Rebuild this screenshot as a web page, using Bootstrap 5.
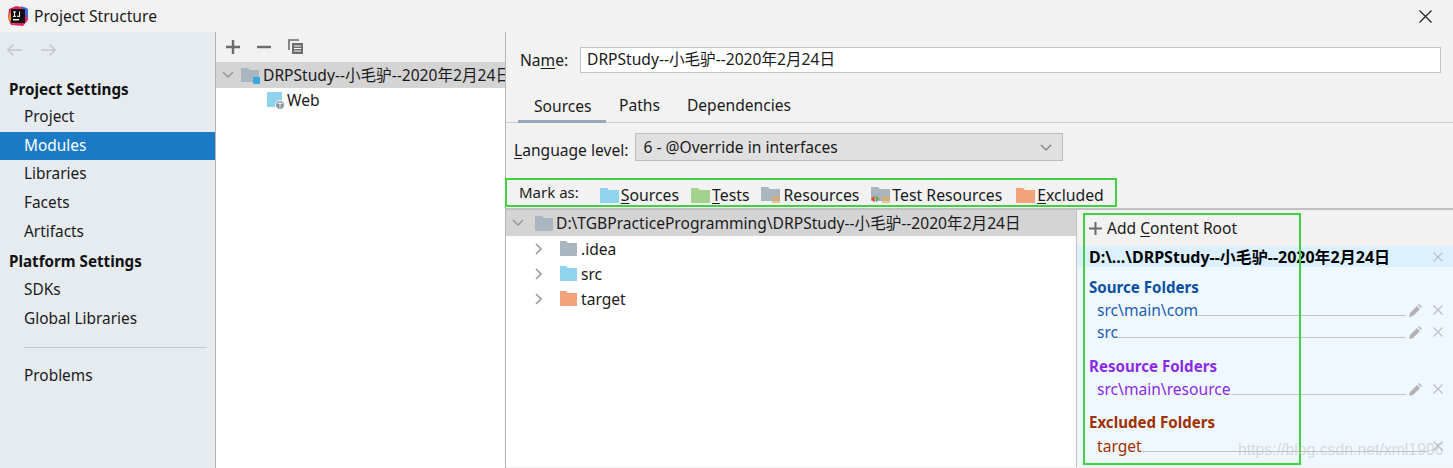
<!DOCTYPE html>
<html lang="en">
<head>
<meta charset="UTF-8">
<title>Project Structure</title>
<link rel="stylesheet" href="https://cdn.jsdelivr.net/npm/bootstrap@5.3.0/dist/css/bootstrap.min.css">
<style>
html, body { height: 468px; overflow: hidden; }
body { font-family: "Noto Sans", "Noto Sans CJK SC", sans-serif; font-size: 15.6px; line-height: 20px; color: #1a1a1a; background: #f2f2f2; position: relative; }
svg { display: block; flex: none; }
u { text-underline-offset: 2px; text-decoration-thickness: 1px; }
.title-bar { height: 32px; padding-left: 7px; gap: 5px; }
.title-bar span { margin-top: -1px; }
.close-x { margin-left: auto; margin-right: 21px; }
.dlg-body { height: 436px; }
.side-pane { width: 216px; background: #e6ebf0; border-right: 1px solid #b4b4b4; flex: none; }
.nav-arrows { height: 36px; padding: 0 0 0 6px; gap: 17px; margin-bottom: 7px; }
.side-head { font-weight: 700; font-size: 15.2px; height: 28px; padding-left: 9px; line-height: 28px; color: #111; }
.side-head.second { margin-top: 1px; height: 28.5px; }
.side-item { height: 28.7px; line-height: 28.7px; padding-left: 24px; font-size: 15.4px; }
.side-item.picked { background: #1a7ac4; color: #fff; }
.side-rule { height: 1px; background: #c6cbd0; margin: 13.5px 8px 14px 24px; }
.mod-pane { width: 290px; background: #fff; border-right: 1px solid #b4b4b4; flex: none; overflow: hidden; }
.mod-tools { height: 30px; background: #f2f2f2; padding-left: 10px; gap: 17px; }
.mod-row { height: 26px; white-space: nowrap; }
.mod-row.on { background: #d4d4d4; padding-left: 6px; gap: 3px; }
.mod-row.sub { padding-left: 51px; gap: 1px; height: 24px; }
.main-pane { min-width: 0; }
.name-row { height: 51px; padding: 15px 12px 0 14px; }
.name-row label { width: 60px; flex: none; padding-top: 3px; }
.name-box { flex: 1; height: 26px; background: #fff; border: 1px solid #c4c4c4; padding-left: 6px; line-height: 23px; }
.tab-row { height: 40px; border-bottom: 1px solid #cfcfcf; align-items: flex-end; padding-left: 12px; }
.tab-item { height: 40px; line-height: 37px; padding: 5px 13.5px 0; }
.tab-item.sel { border-bottom: 3px solid #9aa7bb; margin-bottom: -1px; padding: 5px 14px 0 16px; }
.lang-row { height: 38px; padding: 10px 0 0 8px; gap: 7px; }
.lang-row .lang-lbl { padding-top: 7px; }
.lang-drop { width: 428px; height: 28px; background: #e0e0e0; border: 1px solid #bdbdbd; padding: 0 10px 0 7px; line-height: 25px; }
.mark-row { height: 49px; padding: 21px 0 0 13px; border-bottom: 2px solid #c0c0c0; font-size: 15.8px; }
.mark-lbl { margin-right: 21px; font-size: 15px; }
.mark-btn { gap: 2px; margin-right: 12px; margin-top: 3px; white-space: nowrap; }
.mark-btn.wide-gap { margin-right: 14px; }
.mark-btn.text-gap { gap: 3px; }
.split-row { height: 257px; }
.tree-pane { width: 571px; background: #fff; border-right: 1px solid #c0c0c0; flex: none; }
.tree-row { height: 25px; white-space: nowrap; padding-left: 29px; }
.tree-row.top { height: 26px; background: #d4d4d4; padding-left: 6px; }
.top-folder { margin: 0 3px 0 11px; }
.sub-folder { margin: 0 4px 0 17px; }
.root-pane { min-width: 0; background: #f0f8ff; }
.add-root { height: 36px; padding-left: 12px; gap: 5px; background: #f2f2f2; }
.root-title { height: 21px; background: #dcf0ff; padding: 0 10px 0 12px; font-weight: 700; color: #000; font-size: 16px; white-space: nowrap; }
.grp-head { font-weight: 700; font-size: 15.1px; padding-left: 12px; height: 20px; line-height: 20px; }
.head-src { margin-top: 10px; }
.head-res { margin-top: 13px; }
.head-exc { margin-top: 12px; }
.grp-row { height: 22px; padding: 0 10px 0 20px; }
.row-first { margin-top: 2px; }
.row-exc { margin-top: 3px; }
.grp-line { flex: 1; height: 1px; background: #c4c4c4; align-self: flex-end; margin: 0 3px 5px 0; }
.icon-pen { margin-right: 11px; }
.blue-t { color: #0b4fa0; } .blue-r { color: #1a5fb4; }
.purple-t { color: #8a2be8; }
.brown-t { color: #a03000; }
.anno-mark, .anno-root { position: absolute; border: 2px solid #3fd13f; pointer-events: none; }
.anno-mark { left: 505px; top: 178px; width: 612px; height: 29px; }
.anno-root { left: 1083px; top: 213px; width: 218px; height: 252px; }
.watermark { position: absolute; left: 1238px; top: 440px; color: rgba(190,190,190,.55); font-family: "Liberation Sans", sans-serif; font-size: 15.8px; }
</style>
</head>
<body>

<div class="title-bar d-flex align-items-center">
    <svg width="22" height="22" viewBox="0 0 22 22"><path d="M2 4 9 1l11 2 1 12-5 6-12-1-3-7z" fill="#e0246c"/><path d="M14 1l7 3v10z" fill="#3b6fe0"/><path d="M1 13l4-9 2 16z" fill="#f59a1f"/><rect x="4" y="4" width="14" height="14" fill="#111"/><rect x="6" y="14" width="6" height="1.4" fill="#fff"/><rect x="6" y="6.5" width="3" height="1" fill="#fff"/><rect x="7" y="6.5" width="1" height="5" fill="#fff"/><rect x="6" y="10.8" width="3" height="1" fill="#fff"/><rect x="12" y="6.5" width="1" height="5" fill="#fff"/><rect x="10" y="10.8" width="3" height="1" fill="#fff"/></svg>
    <span>Project Structure</span>
    <svg class="close-x" width="13" height="13" viewBox="0 0 13 13"><path d="M.5.5l12 12M12.5.5l-12 12" stroke="#222" stroke-width="1.2" fill="none"/></svg>
</div>

<div class="dlg-body d-flex">
    <div class="side-pane">
        <div class="nav-arrows d-flex align-items-center">
            <svg width="17" height="14" viewBox="0 0 17 14"><path d="M16 7H2M7.5 1.5 2 7l5.5 5.5" stroke="#c4c8cc" stroke-width="1.7" fill="none"/></svg>
            <svg width="17" height="14" viewBox="0 0 17 14"><path d="M1 7h14M9.5 1.5 15 7l-5.5 5.5" stroke="#c4c8cc" stroke-width="1.7" fill="none"/></svg>
        </div>
        <div class="side-head">Project Settings</div>
        <div class="side-item">Project</div>
        <div class="side-item picked">Modules</div>
        <div class="side-item">Libraries</div>
        <div class="side-item">Facets</div>
        <div class="side-item">Artifacts</div>
        <div class="side-head second">Platform Settings</div>
        <div class="side-item">SDKs</div>
        <div class="side-item">Global Libraries</div>
        <div class="side-rule"></div>
        <div class="side-item">Problems</div>
    </div>

    <div class="mod-pane">
        <div class="mod-tools d-flex align-items-center">
            <svg width="14" height="14" viewBox="0 0 14 14"><path d="M7 0v14M0 7h14" stroke="#6b6b6b" stroke-width="2.4"/></svg>
            <svg width="14" height="14" viewBox="0 0 14 14"><path d="M0 7h14" stroke="#6b6b6b" stroke-width="2.4"/></svg>
            <svg width="16" height="16" viewBox="0 0 16 16"><path d="M1 11V1h10" stroke="#6b6b6b" stroke-width="1.6" fill="none"/><rect x="4" y="4" width="11" height="11" fill="#6b6b6b"/><path d="M6 7h7M6 9.5h7M6 12h7" stroke="#fff"/></svg>
        </div>
        <div class="mod-row on d-flex align-items-center">
            <svg width="12" height="8" viewBox="0 0 12 8"><path d="M1 1l5 5 5-5" stroke="#9a9a9a" stroke-width="1.6" fill="none"/></svg>
            <svg class="ms-1" width="19" height="18" viewBox="0 0 19 18"><path d="M0 2h7l2 2h9v12H0z" fill="#a9b5bf"/><rect x="12" y="11" width="7" height="7" fill="#3aa8dc"/></svg>
            <span>DRPStudy--小毛驴--2020年2月24日</span>
        </div>
        <div class="mod-row sub d-flex align-items-center">
            <svg width="19" height="19" viewBox="0 0 19 19"><rect x="0" y="1" width="15" height="15" fill="#8fd3ef"/><circle cx="13" cy="14" r="4.5" fill="#8b97a1" stroke="#fff"/><path d="M10.5 12.5h5M13 10.5v7" stroke="#fff" stroke-width=".8"/></svg>
            <span>Web</span>
        </div>
    </div>

    <div class="main-pane flex-grow-1">
        <div class="name-row d-flex align-items-start">
            <label><span>Na<u>m</u>e:</span></label>
            <div class="name-box">DRPStudy--小毛驴--2020年2月24日</div>
        </div>
        <div class="tab-row d-flex">
            <div class="tab-item sel">Sources</div>
            <div class="tab-item">Paths</div>
            <div class="tab-item">Dependencies</div>
        </div>
        <div class="lang-row d-flex align-items-start">
            <span class="lang-lbl"><u>L</u>anguage level:</span>
            <div class="lang-drop d-flex align-items-center justify-content-between">
                <span>6 - @Override in interfaces</span>
                <svg width="12" height="7" viewBox="0 0 12 7"><path d="M1 1l5 5 5-5" stroke="#777" stroke-width="1.2" fill="none"/></svg>
            </div>
        </div>
        <div class="mark-row d-flex align-items-start">
            <span class="mark-lbl">Mark as:</span>
            <div class="mark-btn d-flex align-items-center">
                <svg width="19" height="15" viewBox="0 0 19 15"><path d="M0 0h7l2 2h10v13H0z" fill="#8fd3ef"/></svg><span><u>S</u>ources</span>
            </div>
            <div class="mark-btn d-flex align-items-center">
                <svg width="19" height="15" viewBox="0 0 19 15"><path d="M0 0h7l2 2h10v13H0z" fill="#a2d28d"/></svg><span><u>T</u>ests</span>
            </div>
            <div class="mark-btn text-gap d-flex align-items-center">
                <svg width="19" height="18" viewBox="0 0 19 18"><path d="M0 1h7l2 2h10v12H0z" fill="#a9b5bf"/><path d="M11 10.5h8v1.3h-8zM11 13h8v1.3h-8zM11 15.5h8v1.3h-8z" fill="#e9a949"/></svg><span>Resources</span>
            </div>
            <div class="mark-btn wide-gap d-flex align-items-center">
                <svg width="19" height="18" viewBox="0 0 19 18"><path d="M0 1h7l2 2h10v12H0z" fill="#a9b5bf"/><path d="M0 13l3.5-3.5v7z" fill="#e04a1f"/><path d="M5 9.5l3.5 3.5-3.5 3.5z" fill="#5fae4a"/><path d="M11 10.5h8v1.3h-8zM11 13h8v1.3h-8zM11 15.5h8v1.3h-8z" fill="#e9a949"/></svg><span>Test Resources</span>
            </div>
            <div class="mark-btn d-flex align-items-center">
                <svg width="19" height="15" viewBox="0 0 19 15"><path d="M0 0h7l2 2h10v13H0z" fill="#f4a27c"/></svg><span><u>E</u>xcluded</span>
            </div>
        </div>
        <div class="split-row d-flex">
            <div class="tree-pane">
                <div class="tree-row top d-flex align-items-center">
                    <svg width="12" height="8" viewBox="0 0 12 8"><path d="M1 1l5 5 5-5" stroke="#9a9a9a" stroke-width="1.6" fill="none"/></svg>
                    <svg class="top-folder" width="18" height="15" viewBox="0 0 18 15"><path d="M0 0h7l2 2h9v13H0z" fill="#a9b5bf"/></svg>
                    <span>D:\TGBPracticeProgramming\DRPStudy--小毛驴--2020年2月24日</span>
                </div>
                <div class="tree-row d-flex align-items-center">
                    <svg width="8" height="12" viewBox="0 0 8 12"><path d="M1 1l5 5-5 5" stroke="#9a9a9a" stroke-width="1.6" fill="none"/></svg>
                    <svg class="sub-folder" width="17" height="15" viewBox="0 0 17 15"><path d="M0 0h6l2 2h9v13H0z" fill="#a9b5bf"/></svg>
                    <span>.idea</span>
                </div>
                <div class="tree-row d-flex align-items-center">
                    <svg width="8" height="12" viewBox="0 0 8 12"><path d="M1 1l5 5-5 5" stroke="#9a9a9a" stroke-width="1.6" fill="none"/></svg>
                    <svg class="sub-folder" width="17" height="15" viewBox="0 0 17 15"><path d="M0 0h6l2 2h9v13H0z" fill="#8fd3ef"/></svg>
                    <span>src</span>
                </div>
                <div class="tree-row d-flex align-items-center">
                    <svg width="8" height="12" viewBox="0 0 8 12"><path d="M1 1l5 5-5 5" stroke="#9a9a9a" stroke-width="1.6" fill="none"/></svg>
                    <svg class="sub-folder" width="17" height="15" viewBox="0 0 17 15"><path d="M0 0h6l2 2h9v13H0z" fill="#f4a27c"/></svg>
                    <span>target</span>
                </div>
            </div>
            <div class="root-pane flex-grow-1">
                <div class="add-root d-flex align-items-center">
                    <svg width="13" height="13" viewBox="0 0 13 13"><path d="M6.5 0v13M0 6.5h13" stroke="#6b6b6b" stroke-width="2"/></svg>
                    <span>Add <u>C</u>ontent Root</span>
                </div>
                <div class="root-title d-flex align-items-center justify-content-between">
                    <span>D:\...\DRPStudy--小毛驴--2020年2月24日</span>
                    <svg width="10" height="10" viewBox="0 0 10 10"><path d="M.5.5l9 9M9.5.5l-9 9" stroke="#b8bec4" stroke-width="1.1"/></svg>
                </div>
                <div class="grp-head blue-t head-src">Source Folders</div>
                <div class="grp-row row-first d-flex align-items-center blue-r">
                    <span>src\main\com</span><div class="grp-line"></div>
                    <svg class="icon-pen" width="13" height="13" viewBox="0 0 13 13"><path d="M0 13l1-4 7-7 3 3-7 7zM9 1l1-1 3 3-1 1z" fill="#b2b2b2"/></svg>
                    <svg width="10" height="10" viewBox="0 0 10 10"><path d="M.5.5l9 9M9.5.5l-9 9" stroke="#b8bec4" stroke-width="1.1"/></svg>
                </div>
                <div class="grp-row d-flex align-items-center blue-r">
                    <span>src</span><div class="grp-line"></div>
                    <svg class="icon-pen" width="13" height="13" viewBox="0 0 13 13"><path d="M0 13l1-4 7-7 3 3-7 7zM9 1l1-1 3 3-1 1z" fill="#b2b2b2"/></svg>
                    <svg width="10" height="10" viewBox="0 0 10 10"><path d="M.5.5l9 9M9.5.5l-9 9" stroke="#b8bec4" stroke-width="1.1"/></svg>
                </div>
                <div class="grp-head purple-t head-res">Resource Folders</div>
                <div class="grp-row row-first d-flex align-items-center purple-t">
                    <span>src\main\resource</span><div class="grp-line"></div>
                    <svg class="icon-pen" width="13" height="13" viewBox="0 0 13 13"><path d="M0 13l1-4 7-7 3 3-7 7zM9 1l1-1 3 3-1 1z" fill="#b2b2b2"/></svg>
                    <svg width="10" height="10" viewBox="0 0 10 10"><path d="M.5.5l9 9M9.5.5l-9 9" stroke="#b8bec4" stroke-width="1.1"/></svg>
                </div>
                <div class="grp-head brown-t head-exc">Excluded Folders</div>
                <div class="grp-row row-exc d-flex align-items-center brown-t">
                    <span>target</span><div class="grp-line me-1"></div>
                    <svg width="10" height="10" viewBox="0 0 10 10"><path d="M.5.5l9 9M9.5.5l-9 9" stroke="#b8bec4" stroke-width="1.1"/></svg>
                </div>
            </div>
        </div>
    </div>
</div>

<div class="anno-mark"></div>
<div class="anno-root"></div>
<div class="watermark">https://blog.csdn.net/xml1996</div>

<script src="https://cdn.jsdelivr.net/npm/bootstrap@5.3.0/dist/js/bootstrap.bundle.min.js"></script>
</body>
</html>
